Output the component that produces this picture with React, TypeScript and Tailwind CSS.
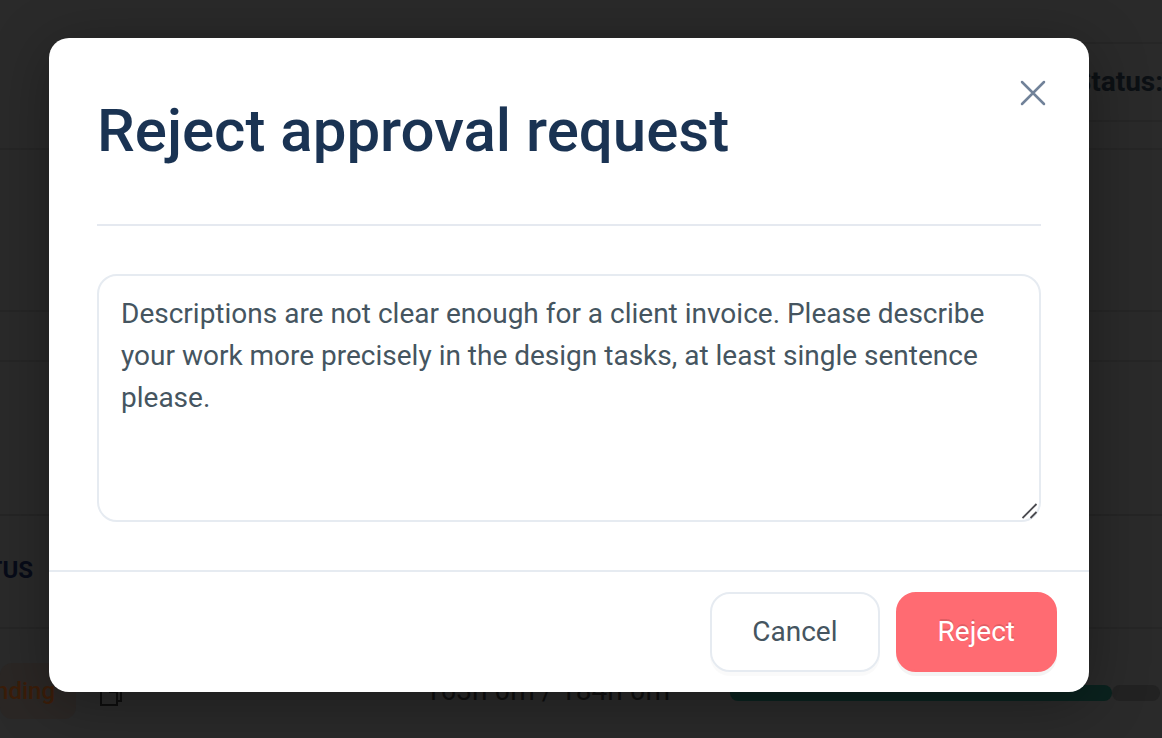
import React, { useState } from "react";

interface RejectDialogProps {
  onClose: () => void;
  onReject: (reason: string) => void;
}

const DEFAULT_REASON =
  "Descriptions are not clear enough for a client invoice. Please describe your work more precisely in the design tasks, at least single sentence please.";

const ApprovalsPage: React.FC = () => (
  <main className="min-h-screen overflow-hidden bg-[#2a2a2a]">
    {/* Top bar with filter */}
    <div className="h-[150px] border-b-2 border-[#262626] pt-[42px]">
      <div className="ml-auto flex h-20 w-[88px] items-center border-y-2 border-[#262626]">
        <span className="text-[28px] leading-9 font-bold text-[#0c1014]">Status:</span>
      </div>
    </div>
    <div className="h-[162px] border-b-2 border-[#262626]" />
    <div className="h-[50px] border-b-2 border-[#262626]" />
    <div className="h-[154px] border-b-2 border-[#252525]" />

    {/* Table head */}
    <div className="flex h-[113px] items-center border-b-2 border-[#262626] pb-1">
      <div className="flex w-[33px] justify-end">
        <span className="text-2xl font-bold text-[#070b18]">STATUS</span>
      </div>
    </div>

    {/* Table row */}
    <div className="flex h-32 items-center">
      <div className="mb-1 flex h-14 w-[76px] shrink-0 items-center justify-end rounded-xl bg-[#2b2725] pr-[21px]">
        <span className="text-2xl font-medium text-[#3b1d09]">Pending</span>
      </div>
      <svg className="ml-6 h-7 w-6 shrink-0" viewBox="0 0 24 28" fill="none" stroke="#0e0e0e" strokeWidth="2">
        <path d="M6 6V2h15v20h-4" />
        <path d="M1 7h10l6 6v13H1z" />
        <path d="M10 7v6h7" />
      </svg>
      <span className="ml-auto shrink-0 pb-1 text-[28px] text-[#0f0f0f]">163h 0m / 184h 0m</span>
      <div className="ml-[60px] flex w-[432px] shrink-0 pr-0.5">
        <div className="h-4 flex-1 rounded-full bg-[#0a221e]" />
        <div className="h-4 w-12 rounded-full bg-[#222222]" />
      </div>
    </div>
  </main>
);

const RejectDialog: React.FC<RejectDialogProps> = ({ onClose, onReject }) => {
  const [reason, setReason] = useState(DEFAULT_REASON);

  return (
    <div
      role="dialog"
      aria-modal="true"
      aria-labelledby="reject-title"
      className="relative w-full rounded-[20px] bg-white shadow-[0_10px_60px_rgba(0,0,0,0.32)]"
    >
      <button
        type="button"
        aria-label="Close"
        onClick={onClose}
        className="absolute top-8 right-8 flex h-12 w-12 cursor-pointer items-center justify-center text-[#718299]"
      >
        <svg className="h-7 w-7" viewBox="0 0 28 28" fill="none" stroke="currentColor" strokeWidth="2.5" strokeLinecap="round">
          <path d="M3 2L25 24M25 2L3 24" />
        </svg>
      </button>

      <div className="px-12">
        <div className="border-b-2 border-[#e5e9f0] py-12">
          <h1 id="reject-title" className="text-[60px] leading-[90px] font-medium text-[#1a3353]">
            Reject approval request
          </h1>
        </div>

        <div className="relative py-12">
          <textarea
            aria-label="Reason"
            value={reason}
            onChange={(e) => setReason(e.target.value)}
            className="block h-[248px] w-full resize-none rounded-[20px] border-2 border-[#e6ebf1] px-[22px] py-[17px] text-[28px] leading-[42px] text-[#455560] focus:outline-none"
          />
          {/* Resize grip */}
          <svg className="pointer-events-none absolute right-[3px] bottom-[51px] h-4 w-4" viewBox="0 0 16 16" fill="none" stroke="#4b4b50" strokeWidth="1.8">
            <path d="M0.5 15L14.5 1M8.5 15L14.5 9" />
          </svg>
        </div>
      </div>

      <div className="flex justify-end gap-4 border-t-2 border-[#e6ebf1] px-8 py-5">
        <button
          type="button"
          onClick={onClose}
          className="h-20 cursor-pointer rounded-[20px] border-2 border-[#e6ebf1] bg-white px-10 text-[28px] text-[#455560] shadow-[0_4px_0_rgba(0,0,0,0.02)]"
        >
          Cancel
        </button>
        <button
          type="button"
          onClick={() => onReject(reason)}
          className="h-20 cursor-pointer rounded-[20px] border-2 border-[#ff6b72] bg-[#ff6b72] px-10 text-[28px] text-white shadow-[0_4px_0_rgba(0,0,0,0.045)] text-shadow-[0_-2px_0_rgba(0,0,0,0.12)]"
        >
          Reject
        </button>
      </div>
    </div>
  );
};

const App: React.FC = () => {
  const [open, setOpen] = useState(true);

  const handleReject = (reason: string) => {
    console.log("Rejected:", reason);
    setOpen(false);
  };

  return (
    <div className="relative h-screen overflow-hidden font-[Roboto,sans-serif]">
      <ApprovalsPage />
      {open && (
        <div className="absolute inset-0 pt-[38px] pr-[73px] pl-[49px]">
          <RejectDialog onClose={() => setOpen(false)} onReject={handleReject} />
        </div>
      )}
    </div>
  );
};

export default App;
